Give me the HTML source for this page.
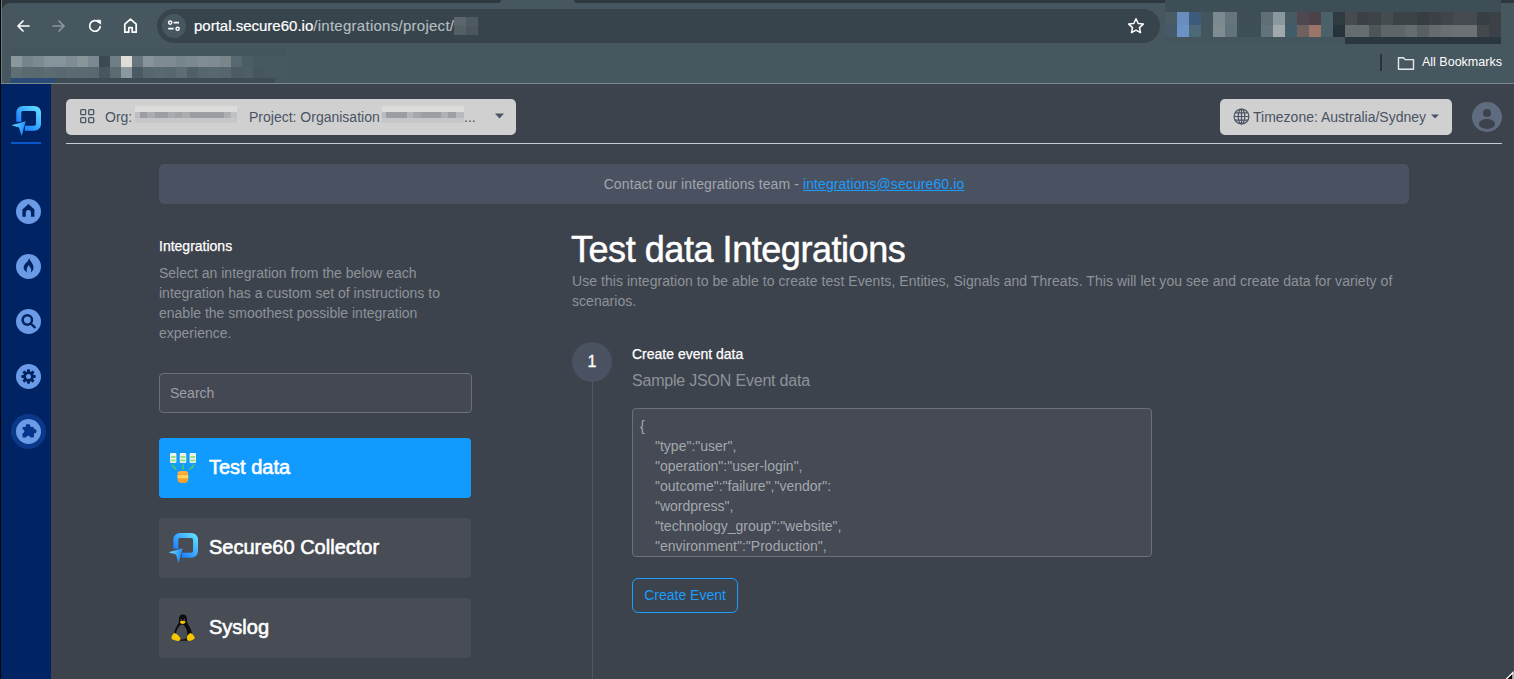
<!DOCTYPE html>
<html><head><meta charset="utf-8">
<style>
*{box-sizing:border-box;margin:0;padding:0}
html,body{width:1514px;height:679px;overflow:hidden;background:#3d434c;font-family:"Liberation Sans",sans-serif}
.abs{position:absolute}
.px{position:absolute;display:block}
svg{position:absolute;overflow:visible}
#chrome{position:absolute;left:0;top:0;width:1514px;height:84px;background:#465760}
#lborder{position:absolute;left:0;top:0;width:1px;height:679px;background:#050607;z-index:9}
#lline{position:absolute;left:1px;top:0;width:1px;height:83px;background:#6a7a80;z-index:9}
.tabdark{position:absolute;top:0;height:3px;background:#2e393f}
#addr{position:absolute;left:157px;top:9px;width:1003px;height:34px;border-radius:17px;background:#37444b}
#siteinfo{position:absolute;left:162px;top:14px;width:24px;height:24px;border-radius:12px;background:#465760}
#url{position:absolute;left:194px;top:16px;font-size:15px;line-height:20px;color:#ffffff;white-space:nowrap;-webkit-text-stroke:0.2px #fff}
#url span{color:#b5bec3;letter-spacing:0.27px;-webkit-text-stroke:0.15px #b5bec3}
#chromeline{position:absolute;left:1px;top:83px;width:1513px;height:1px;background:#7a8a91}
#allbm{position:absolute;left:1422px;top:55px;font-size:12.5px;line-height:15px;color:#ffffff;white-space:nowrap}
#sidebar{position:absolute;left:1px;top:84px;width:50px;height:595px;background:#002463}
.navc{position:absolute;left:16px;width:25px;height:25px;border-radius:50%;background:#6b9be6}
#pill{position:absolute;left:66px;top:99px;width:450px;height:36px;border-radius:5px;background:#d0d0d0;color:#4a5464;font-size:14px}
#tz{position:absolute;left:1220px;top:99px;width:232px;height:36px;border-radius:5px;background:#d0d0d0;color:#4a5464;font-size:14px}
#hdrline{position:absolute;left:66px;top:143px;width:1436px;height:1px;background:#c8cacd}
#avatar{position:absolute;left:1472px;top:102px;width:30px;height:30px;border-radius:50%;background:#5f6b7f;overflow:hidden}
#banner{position:absolute;left:159px;top:164px;width:1250px;height:40px;border-radius:5px;background:#4a5261;text-align:center;font-size:14px;line-height:40px;color:#a2a6ad;letter-spacing:0.1px}
#banner a{color:#1a9dff;text-decoration:underline}
.t{position:absolute;white-space:nowrap}
#intro{position:absolute;left:159px;top:263px;width:300px;font-size:14px;line-height:20px;color:#8e9299}
#search{position:absolute;left:159px;top:373px;width:313px;height:40px;border:1px solid #6e6f75;border-radius:4px;background:#444853;color:#9c9ea3;font-size:14px;line-height:38px;padding-left:10px}
.item{position:absolute;left:159px;width:312px;height:60px;border-radius:4px;background:#474c55}
.item .lbl{position:absolute;left:50px;top:18px;font-size:20px;line-height:22px;font-weight:400;-webkit-text-stroke:0.6px #fff;color:#ffffff;white-space:nowrap}
#sub{position:absolute;left:572px;top:271px;width:840px;font-size:14px;line-height:20px;color:#8e9299;letter-spacing:0.05px}
#stepc{position:absolute;left:572px;top:342px;width:40px;height:40px;border-radius:50%;background:#4a5262;color:#fff;font-size:16px;line-height:40px;text-align:center;-webkit-text-stroke:0.3px #fff}
#vline{position:absolute;left:592px;top:382px;width:1px;height:297px;background:#4f5765}
#ta{position:absolute;left:632px;top:408px;width:520px;height:149px;border:1px solid #6b7079;border-radius:4px;background:#454a54;overflow:hidden;color:#a4a8ae;font-size:14px;line-height:20px;padding:7px 0 0 7px;white-space:pre}
#ta div{padding-left:15px}
#btn{position:absolute;left:632px;top:578px;width:106px;height:35px;border:1px solid #1a9dff;border-radius:6px;color:#1a9dff;font-size:14px;line-height:33px;text-align:center}
</style></head><body>
<div id="lborder"></div>
<div id="chrome">
  <div class="tabdark" style="left:0;width:501px;border-bottom-right-radius:4px"></div>
  <div class="tabdark" style="left:574px;width:940px;border-bottom-left-radius:4px"></div>
  <div id="lline"></div>
  <svg style="left:2px;top:3px" width="8" height="8" viewBox="0 0 8 8"><path d="M0 0H8A8 8 0 0 0 0 8z" fill="#2e393f"/></svg>
  <div id="addr"></div>
  <div id="siteinfo"></div>
  <!-- back -->
  <svg style="left:15px;top:18px" width="16" height="16" viewBox="0 0 16 16"><path d="M14 8H3M8 3L3 8l5 5" fill="none" stroke="#fff" stroke-width="1.7" stroke-linecap="round" stroke-linejoin="round"/></svg>
  <!-- forward -->
  <svg style="left:51px;top:18px" width="16" height="16" viewBox="0 0 16 16"><path d="M2 8h11M8 3l5 5-5 5" fill="none" stroke="#8b979c" stroke-width="1.7" stroke-linecap="round" stroke-linejoin="round"/></svg>
  <!-- reload -->
  <svg style="left:87px;top:18px" width="16" height="16" viewBox="0 0 16 16"><path d="M13.2 8.6A5.3 5.3 0 1 1 11.6 4.1" fill="none" stroke="#fff" stroke-width="1.7" stroke-linecap="round"/><path d="M9.6 2.2h4v4z" fill="#fff" stroke="#fff" stroke-width="0.8" stroke-linejoin="round"/></svg>
  <!-- home -->
  <svg style="left:122px;top:17px" width="17" height="17" viewBox="0 0 17 17"><path d="M2.8 15.2V7.2L8.5 2.2l5.7 5v8H10.2v-4.6H6.8v4.6z" fill="none" stroke="#fff" stroke-width="1.7" stroke-linejoin="round"/></svg>
  <!-- site info tune -->
  <svg style="left:166px;top:18px" width="16" height="16" viewBox="0 0 16 16"><circle cx="4.2" cy="4.6" r="1.6" fill="none" stroke="#fff" stroke-width="1.4"/><path d="M7.6 4.6h5.4M2.2 10.6h5.4" stroke="#fff" stroke-width="1.9"/><circle cx="11.6" cy="10.8" r="1.6" fill="none" stroke="#fff" stroke-width="1.4"/></svg>
  <div id="url">portal.secure60.io<span>/integrations/project/</span></div>
  <i class="px" style="left:454px;top:17px;width:12px;height:9px;background:#5a666c"></i>
  <i class="px" style="left:466px;top:17px;width:12px;height:9px;background:#4e5a60"></i>
  <i class="px" style="left:454px;top:26px;width:12px;height:9px;background:#545f65"></i>
  <i class="px" style="left:466px;top:26px;width:12px;height:9px;background:#4a565c"></i>
  <!-- star -->
  <svg style="left:1127px;top:17px" width="18" height="18" viewBox="0 0 18 18"><path d="M9 1.8l2.2 4.7 5.1.6-3.8 3.5 1 5.1L9 13.2l-4.5 2.5 1-5.1L1.7 7.1l5.1-.6z" fill="none" stroke="#fff" stroke-width="1.5" stroke-linejoin="round"/></svg>
  <i class="px" style="left:11px;top:48px;width:275px;height:8px;background:linear-gradient(90deg,#44555d 0px 11px,#44555d 11px 22px,#44555d 22px 33px,#44555d 33px 44px,#44555d 44px 55px,#44555d 55px 66px,#44555d 66px 77px,#44555d 77px 88px,#44555d 88px 99px,#44555d 99px 110px,#44555d 110px 121px,#44555d 121px 132px,#44555d 132px 143px,#44555d 143px 154px,#44555d 154px 165px,#44555d 165px 176px,#44555d 176px 187px,#44555d 187px 198px,#44555d 198px 209px,#44555d 209px 220px,#44555d 220px 231px,#44555d 231px 242px,#44555d 242px 253px,#44555d 253px 264px,#44555d 264px 275px)"></i>
<i class="px" style="left:11px;top:56px;width:275px;height:11px;background:linear-gradient(90deg,#8a979c 0px 11px,#74848a 11px 22px,#7c8b90 22px 33px,#85939a 33px 44px,#85939a 44px 55px,#7f8d93 55px 66px,#899699 66px 77px,#7a898f 77px 88px,#3b4b53 88px 99px,#6e7e85 99px 110px,#deded6 110px 121px,#67757c 121px 132px,#86949a 132px 143px,#7e8c92 143px 154px,#7e8c92 154px 165px,#77868c 165px 176px,#7b898f 176px 187px,#808e94 187px 198px,#7e8c92 198px 209px,#79878d 209px 220px,#566870 220px 231px,#4c5c64 231px 242px,#475860 242px 253px,#475860 253px 264px,#475860 264px 275px)"></i>
<i class="px" style="left:11px;top:67px;width:275px;height:11px;background:linear-gradient(90deg,#606f74 0px 11px,#5b6a70 11px 22px,#5a696e 22px 33px,#5d6c72 33px 44px,#576870 44px 55px,#5b6b71 55px 66px,#5a6a70 66px 77px,#596970 77px 88px,#47575f 88px 99px,#5a6b72 99px 110px,#8b989d 110px 121px,#4b5b63 121px 132px,#56676e 132px 143px,#586970 143px 154px,#56676e 154px 165px,#5d6d73 165px 176px,#4e5f66 176px 187px,#56666d 187px 198px,#576870 198px 209px,#56666d 209px 220px,#4c5c64 220px 231px,#4e5e66 231px 242px,#455660 242px 253px,#475860 253px 264px,#475860 264px 275px)"></i>
<i class="px" style="left:11px;top:78px;width:264px;height:5px;background:linear-gradient(90deg,#2c4a76 0px 11px,#2c4a76 11px 22px,#2c4a76 22px 33px,#2c4a76 33px 44px,#3e4d55 44px 55px,#3e4d55 55px 66px,#3e4d55 66px 77px,#3e4d55 77px 88px,#3e4d55 88px 99px,#3e4d55 99px 110px,#3e4d55 110px 121px,#3e4d55 121px 132px,#3e4d55 132px 143px,#3e4d55 143px 154px,#3e4d55 154px 165px,#3e4d55 165px 176px,#3e4d55 176px 187px,#3e4d55 187px 198px,#3e4d55 198px 209px,#3e4d55 209px 220px,#3e4d55 220px 231px,#3e4d55 231px 242px,#3e4d55 242px 253px,#3e4d55 253px 264px)"></i>
<i class="px" style="left:1165px;top:0px;width:336px;height:12px;background:linear-gradient(90deg,#3e4e56 0px 12px,#3e4e56 12px 24px,#3e4e56 24px 36px,#3e4e56 36px 48px,#3e4e56 48px 60px,#3e4e56 60px 72px,#3e4e56 72px 84px,#3e4e56 84px 96px,#3e4e56 96px 108px,#3e4e56 108px 120px,#3e4e56 120px 132px,#3e4e56 132px 144px,#3e4e56 144px 156px,#3e4e56 156px 168px,#3e4e56 168px 180px,#3e4e56 180px 192px,#3e4e56 192px 204px,#3e4e56 204px 216px,#3e4e56 216px 228px,#3e4e56 228px 240px,#3e4e56 240px 252px,#3e4e56 252px 264px,#3e4e56 264px 276px,#3e4e56 276px 288px,#3e4e56 288px 300px,#3e4e56 300px 312px,#3e4e56 312px 324px,#3e4e56 324px 336px)"></i>
<i class="px" style="left:1165px;top:12px;width:336px;height:13px;background:linear-gradient(90deg,#4b5b63 0px 12px,#6a8dc0 12px 24px,#3f5b7b 24px 36px,#45555d 36px 48px,#7a8a90 48px 60px,#65757b 60px 72px,#3f4f57 72px 84px,#3f4f57 84px 96px,#5f6f75 96px 108px,#8a979c 108px 120px,#475b65 120px 132px,#4f4850 132px 144px,#4b4349 144px 156px,#4b6169 156px 168px,#2f3b41 168px 180px,#454b4f 180px 192px,#3b4147 192px 204px,#3d4347 204px 216px,#454d51 216px 228px,#3b4347 228px 240px,#3b4347 240px 252px,#373d43 252px 264px,#3b4147 264px 276px,#3f454b 276px 288px,#474b51 288px 300px,#454b4f 300px 312px,#373f45 312px 324px,#3b4147 324px 336px)"></i>
<i class="px" style="left:1165px;top:25px;width:336px;height:12px;background:linear-gradient(90deg,#45596b 0px 12px,#6b91c5 12px 24px,#4b6979 24px 36px,#45555d 36px 48px,#7f8d93 48px 60px,#63737b 60px 72px,#3f4f57 72px 84px,#3f4f57 84px 96px,#63737b 96px 108px,#a1a9af 108px 120px,#415d69 120px 132px,#6f6161 132px 144px,#9b7569 144px 156px,#4b6169 156px 168px,#27333b 168px 180px,#656d71 180px 192px,#656d71 192px 204px,#4d5559 204px 216px,#5d6569 216px 228px,#5d6569 228px 240px,#656d71 240px 252px,#595f65 252px 264px,#656b6f 264px 276px,#696f73 276px 288px,#6b7175 288px 300px,#6b7175 300px 312px,#43494d 312px 324px,#3b4147 324px 336px)"></i>
<i class="px" style="left:1165px;top:37px;width:336px;height:7px;background:linear-gradient(90deg,#45555d 0px 12px,#45555d 12px 24px,#45555d 24px 36px,#45555d 36px 48px,#45555d 48px 60px,#45555d 60px 72px,#45555d 72px 84px,#45555d 84px 96px,#45555d 96px 108px,#45555d 108px 120px,#45555d 120px 132px,#45555d 132px 144px,#45555d 144px 156px,#45555d 156px 168px,#45555d 168px 180px,#2b373f 180px 192px,#2b373f 192px 204px,#2b373f 204px 216px,#2b373f 216px 228px,#2b373f 228px 240px,#2b373f 240px 252px,#2b373f 252px 264px,#2b373f 264px 276px,#2b373f 276px 288px,#2b373f 288px 300px,#2b373f 300px 312px,#2b373f 312px 324px,#2b373f 324px 336px)"></i>
  <i class="px" style="left:1380px;top:54px;width:2px;height:17px;background:#2a3439"></i>
  <svg style="left:1397px;top:55px" width="18" height="16" viewBox="0 0 18 16"><path d="M1.5 2.8h5l1.6 1.8h8.4v9.6h-15z" fill="none" stroke="#e6e9ea" stroke-width="1.4" stroke-linejoin="round"/></svg>
  <div id="allbm">All Bookmarks</div>
  <div id="chromeline"></div>
</div>
<div id="sidebar"></div>
<svg style="left:6px;top:100px" width="40" height="40" viewBox="0 0 40 40">
  <defs><linearGradient id="lg1" x1="0" y1="1" x2="1" y2="0"><stop offset="0" stop-color="#1372ff"/><stop offset="1" stop-color="#5fdcff"/></linearGradient>
  <linearGradient id="lg2" x1="0" y1="0" x2="1" y2="0.3"><stop offset="0" stop-color="#7fe4ff"/><stop offset="1" stop-color="#1a8cff"/></linearGradient></defs>
  <path d="M12.8 21.8V12.6A4.2 4.2 0 0 1 17 8.4H28.3A4.2 4.2 0 0 1 32.5 12.6V24A4.2 4.2 0 0 1 28.3 28.2H18.9" fill="none" stroke="url(#lg1)" stroke-width="5"/>
  <path d="M5.6 25.3L19.7 21.2L15.6 35.9L13 27.6Z" fill="url(#lg2)"/>
</svg>
<i class="px" style="left:11px;top:142px;width:30px;height:2px;background:#0b56c8"></i>
<div class="navc" style="top:199px"></div>
<div class="navc" style="top:254px"></div>
<div class="navc" style="top:309px"></div>
<div class="navc" style="top:364px"></div>
<div class="px" style="left:11px;top:414px;width:35px;height:35px;border-radius:50%;background:#0b3889"></div>
<div class="navc" style="top:419px"></div>
<!-- home glyph -->
<svg style="left:22px;top:204px" width="13" height="13" viewBox="0 0 13 13"><path d="M0.4 5.6L6.4 0.1l6 5.5v7.2H9V8.6a2.6 2.6 0 0 0-5.2 0v4.2H0.4z" fill="#01235f"/></svg>
<!-- fire glyph -->
<svg style="left:22px;top:257px" width="13" height="16" viewBox="0 0 13 16"><path d="M7.3 1C8 4.5 11.5 6.5 11.5 10.5C11.5 12.9 10.3 14.6 8.8 15.4C9.5 14 9.4 12.5 8.7 11.3C8.1 10.2 7.3 9.3 6.8 7.8C6.2 9.3 5.3 10.3 4.9 11.5C4.5 12.7 4.6 14.1 5.3 15.4C3.5 14.6 1.6 12.8 1.6 10.6C1.6 6.6 6.6 4.8 7.3 1Z" fill="#01235f"/></svg>
<!-- search glyph -->
<svg style="left:21px;top:314px" width="15" height="15" viewBox="0 0 15 15"><circle cx="6.3" cy="6" r="4.7" fill="none" stroke="#01235f" stroke-width="2.5"/><path d="M9.8 9.5l3.9 3.8" stroke="#01235f" stroke-width="2.4" stroke-linecap="round"/></svg>
<!-- gear glyph -->
<svg style="left:21px;top:369px" width="15" height="15" viewBox="0 0 15 15"><g transform="translate(7.5 7.5)" fill="#01235f"><rect x="-1.5" y="-7.2" width="3" height="14.4" rx="0.7"/><rect x="-1.5" y="-7.2" width="3" height="14.4" rx="0.7" transform="rotate(45)"/><rect x="-1.5" y="-7.2" width="3" height="14.4" rx="0.7" transform="rotate(90)"/><rect x="-1.5" y="-7.2" width="3" height="14.4" rx="0.7" transform="rotate(135)"/><circle r="5.2"/></g><circle cx="7.5" cy="7.5" r="2.5" fill="#6b9be6"/></svg>
<!-- puzzle glyph -->
<svg style="left:21px;top:423px" width="16" height="16" viewBox="0 0 16 16"><g fill="#04358a"><rect x="1.5" y="4.1" width="11.4" height="10.5" rx="0.8"/><circle cx="7" cy="3.3" r="2.4"/><circle cx="13.3" cy="8.3" r="2.2"/></g><circle cx="1.3" cy="8.3" r="2" fill="#6b9be6"/><circle cx="7.2" cy="14.9" r="2.2" fill="#6b9be6"/></svg>

<div id="pill">
  <svg style="left:14px;top:10px" width="15" height="15" viewBox="0 0 15 15"><g fill="none" stroke="#4a5464" stroke-width="1.3"><rect x="0.7" y="0.7" width="5" height="5" rx="1"/><rect x="8.7" y="0.7" width="5" height="5" rx="1"/><rect x="0.7" y="8.7" width="5" height="5" rx="1"/><rect x="8.7" y="8.7" width="5" height="5" rx="1"/></g></svg>
  <span class="t" style="left:39px;top:10px;line-height:16px">Org:</span>
  <i class="px" style="left:69px;top:7px;width:102px;height:6px;background:#dcdcdb"></i><i class="px" style="left:69px;top:13px;width:102px;height:6px;background:linear-gradient(90deg,#bdbec1 0px 5px,#9b9da2 5px 12px,#aaacb0 12px 20px,#9c9ea3 20px 33px,#a9abaf 33px 40px,#a2a4a8 40px 47px,#abadb0 47px 55px,#9b9da2 55px 89px,#adafb2 89px 96px,#c0c1c3 96px 102px)"></i><i class="px" style="left:69px;top:19px;width:102px;height:5px;background:#c6c7c9"></i>
  <span class="t" style="left:183px;top:10px;line-height:16px">Project: Organisation</span>
  <i class="px" style="left:316px;top:7px;width:82px;height:6px;background:#dcdcdb"></i><i class="px" style="left:316px;top:13px;width:82px;height:6px;background:linear-gradient(90deg,#b9babd 0px 4px,#9b9da2 4px 25px,#b5b6b9 25px 31px,#a5a7ab 31px 39px,#9c9ea3 39px 59px,#aeb0b3 59px 66px,#9da0a4 66px 74px,#b8b9bc 74px 82px)"></i><i class="px" style="left:316px;top:19px;width:82px;height:5px;background:#c6c7c9"></i>
  <span class="t" style="left:398px;top:10px;line-height:16px">...</span>
  <svg style="left:429px;top:14px" width="9" height="6" viewBox="0 0 9 6"><path d="M0 0.5h9L4.5 5.5z" fill="#4a5464"/></svg>
</div>
<div id="tz">
  <svg style="left:13px;top:9px" width="17" height="17" viewBox="0 0 17 17"><g fill="none" stroke="#4a5464" stroke-width="1.2"><circle cx="8.5" cy="8.5" r="7.4"/><ellipse cx="8.5" cy="8.5" rx="3.3" ry="7.4"/><path d="M8.5 1.1v14.8M1.1 8.5h14.8M2.2 4.8h12.6M2.2 12.2h12.6"/></g></svg>
  <span class="t" style="left:33px;top:10px;line-height:16px">Timezone: Australia/Sydney</span>
  <svg style="left:211px;top:15px" width="9" height="6" viewBox="0 0 9 6"><path d="M0 0.5h8L4 4.5z" fill="#4a5464"/></svg>
</div>
<div id="avatar"><div class="px" style="left:11px;top:7px;width:8px;height:8px;border-radius:50%;background:#3d434c"></div><div class="px" style="left:6.7px;top:17px;width:16.6px;height:10px;border-radius:50%;background:#3d434c"></div></div>
<div id="hdrline"></div>
<div id="banner">Contact our integrations team - <a>integrations@secure60.io</a></div>

<div class="t" style="left:159px;top:238px;font-size:14px;line-height:16px;color:#fff;-webkit-text-stroke:0.25px #fff">Integrations</div>
<div id="intro">Select an integration from the below each integration has a custom set of instructions to enable the smoothest possible integration experience.</div>
<div id="search">Search</div>

<div class="item" style="top:438px;background:#129bff">
  <svg style="left:10px;top:11px" width="28" height="32" viewBox="0 0 28 32">
    <g fill="#eef3ee"><rect x="1" y="4" width="6.4" height="10" rx="1"/><rect x="10.8" y="4" width="6.4" height="10" rx="1"/><rect x="20.6" y="4" width="6.4" height="10" rx="1"/></g>
    <g fill="#9be07e"><rect x="1.8" y="7" width="4.8" height="2"/><rect x="1.8" y="10.5" width="4.8" height="2"/><rect x="11.6" y="7" width="4.8" height="2"/><rect x="11.6" y="10.5" width="4.8" height="2"/><rect x="21.4" y="7" width="4.8" height="2"/><rect x="21.4" y="10.5" width="4.8" height="2"/></g>
    <g fill="none" stroke="#5ad33c" stroke-width="1.2"><path d="M3.2 15.5q0.8 3 3.5 4"/><path d="M14 15.5v4"/><path d="M24.8 15.5q-0.8 3-3.5 4"/></g>
    <g fill="#5ad33c"><path d="M5.8 20.6l2-0.2-1-1.8z"/><path d="M12.8 19l1.2 2 1.2-2z"/><path d="M22.2 20.6l-2-0.2 1-1.8z"/></g>
    <rect x="8.6" y="22" width="10.6" height="12" rx="4" fill="#f6a12e"/>
    <rect x="8.6" y="26" width="10.6" height="3.4" fill="#ffd45a"/>
    <ellipse cx="13.9" cy="23.6" rx="5.3" ry="1.6" fill="#ffb03c"/>
  </svg>
  <div class="lbl">Test data</div>
</div>
<div class="item" style="top:518px">
  <svg style="left:4px;top:9px" width="40" height="40" viewBox="0 0 40 40">
    <defs><linearGradient id="lg3" x1="0" y1="1" x2="1" y2="0"><stop offset="0" stop-color="#1372ff"/><stop offset="1" stop-color="#5fdcff"/></linearGradient>
    <linearGradient id="lg4" x1="0" y1="0" x2="1" y2="0.3"><stop offset="0" stop-color="#7fe4ff"/><stop offset="1" stop-color="#1a8cff"/></linearGradient></defs>
    <g>
    <path d="M12.8 21.8V12.6A4.2 4.2 0 0 1 17 8.4H28.3A4.2 4.2 0 0 1 32.5 12.6V24A4.2 4.2 0 0 1 28.3 28.2H18.9" fill="none" stroke="url(#lg3)" stroke-width="5"/>
    <path d="M5.6 25.3L19.7 21.2L15.6 35.9L13 27.6Z" fill="url(#lg4)"/></g>
  </svg>
  <div class="lbl">Secure60 Collector</div>
</div>
<div class="item" style="top:598px">
  <svg style="left:12px;top:16px" width="25" height="28" viewBox="0 0 25 28">
    <path d="M12 0.4C9.4 0.4 8 2.4 8 5C8 7.4 8 8.6 6.8 10.6C5 13.4 3.4 16.4 3.2 20L4 25.6C6 26.6 9 26.8 12 26.8C15 26.8 18.6 26.4 20.6 25.2L21 20C20.6 16.4 18.8 13 17.2 10.6C16 8.6 16 7.4 16 5C16 2.4 14.6 0.4 12 0.4Z" fill="#0c0c0c"/>
    <path d="M11 10.6C8.8 10.8 5.2 15 5 19.8C4.9 23 7.8 25.6 11.2 25.6C14.4 25.6 16.4 23.4 16.4 20C16.4 15.4 13.4 10.6 11 10.6Z" fill="#474c55"/>
    <circle cx="10.2" cy="5.6" r="0.9" fill="#4a4a4a"/><circle cx="13.6" cy="5.6" r="0.9" fill="#4a4a4a"/>
    <path d="M8.8 8C9.5 6.4 14 6.4 14.6 8C14.3 9.3 12.8 10 11.7 10C10.6 10 9.1 9.3 8.8 8Z" fill="#f7c400"/>
    <path d="M0.6 22.8C1 21 2.6 19.4 3.8 19C5.6 19.6 7.8 21.6 9.4 24C9.8 25.4 9 26.8 7.4 27C5.4 27.2 2.4 25.8 1 25.2C0.4 24.6 0.4 23.6 0.6 22.8Z" fill="#f7c400"/>
    <path d="M23.6 23.4C23 21.4 21.4 19.6 19.6 19C17.8 19.8 16 21.6 15.8 23.6C15.6 25.2 16.4 26.8 18 27C19.8 27 22 25.8 23.4 24.8C23.8 24.4 23.8 23.8 23.6 23.4Z" fill="#f7c400"/>
  </svg>
  <div class="lbl">Syslog</div>
</div>

<div class="t" style="left:571px;top:230px;font-size:36px;line-height:40px;letter-spacing:-0.45px;color:#fff;-webkit-text-stroke:0.5px #fff">Test data Integrations</div>
<div id="sub">Use this integration to be able to create test Events, Entities, Signals and Threats. This will let you see and create data for variety of scenarios.</div>
<div id="vline"></div>
<div id="stepc">1</div>
<div class="t" style="left:632px;top:346px;font-size:14px;line-height:16px;color:#fff;-webkit-text-stroke:0.25px #fff">Create event data</div>
<div class="t" style="left:632px;top:372px;font-size:16px;line-height:18px;letter-spacing:-0.2px;color:#8e9299">Sample JSON Event data</div>
<div id="ta">{
<div>"type":"user",</div><div>"operation":"user-login",</div><div>"outcome":"failure","vendor":</div><div>"wordpress",</div><div>"technology_group":"website",</div><div>"environment":"Production",</div><div>"sender_ip":"1.2.3.4"</div></div>
<div id="btn">Create Event</div>
<svg style="left:1505px;top:670px" width="10" height="10" viewBox="0 0 10 10"><path d="M1 9.5L8 2.5V9.5z" fill="#000" stroke="#fff" stroke-width="1.2"/></svg>
</body></html>
